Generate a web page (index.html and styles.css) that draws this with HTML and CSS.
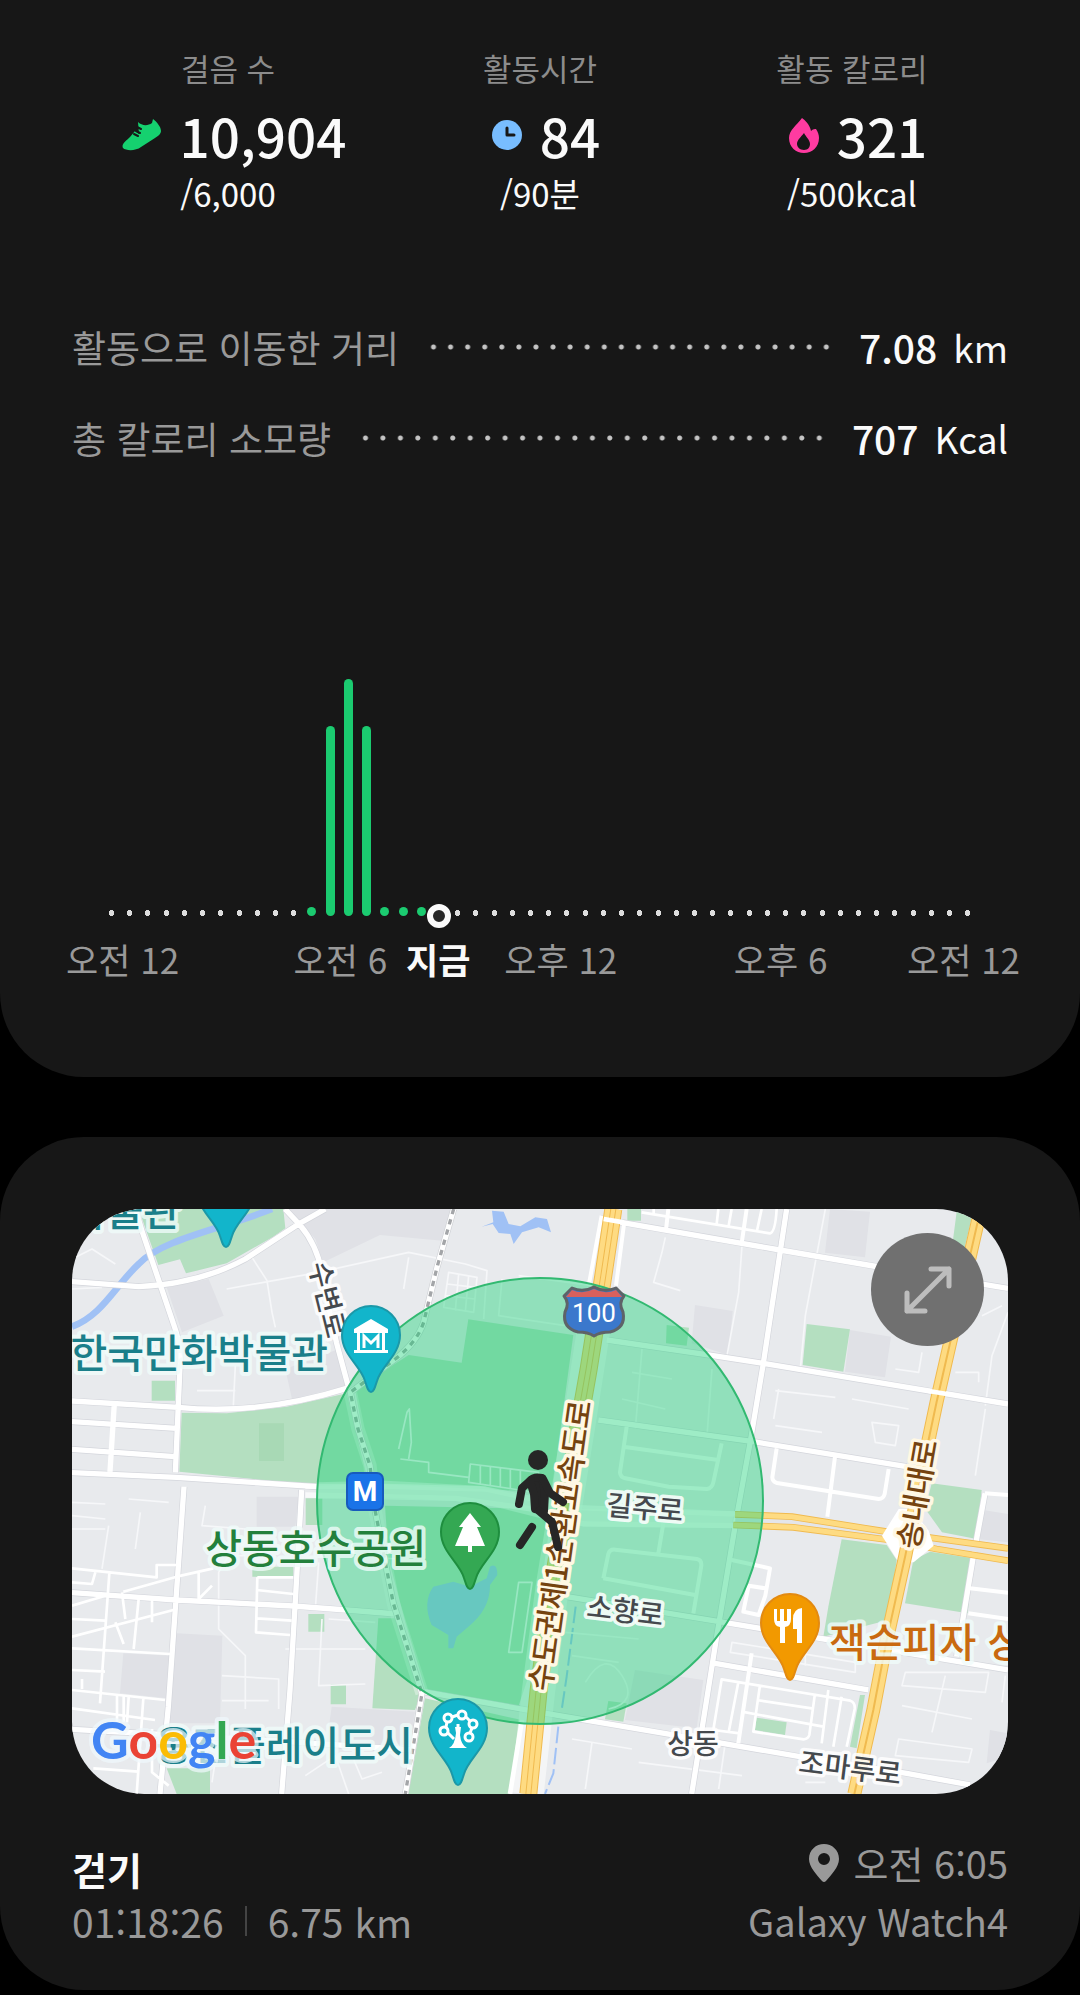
FILE: index.html
```html
<!DOCTYPE html>
<html lang="ko">
<head>
    <meta charset="UTF-8">
    <meta name="viewport" content="width=device-width, initial-scale=1.0">
    <title>일일 활동</title>
    <link rel="stylesheet" href="styles.css">
</head>
<body>

    <main class="page">
        <section class="card card-activity">
            <div class="stats">
                <div class="stat">
                    <div class="stat-label">걸음 수</div>
                    <div class="stat-value">
                        <svg class="icon-shoe" viewBox="0 0 40 32" aria-hidden="true">
                            <path fill="#15d16f" d="M1 29C-1 25 4 22 8 18L13 12L17 15L16 3C20 7 26 7 30 4L31 0C35 3 39 8 39 12C39 15 36 17 33 19L19 28C14 32 4 32 1 29Z"/>
                            <path stroke="#171717" stroke-width="2" stroke-linecap="round" fill="none" d="M12 15L16 17M14 12L18 14M15 8L19 10"/>
                        </svg>
                        <strong>10,904</strong>
                    </div>
                    <div class="stat-goal">/6,000</div>
                </div>
                <div class="stat">
                    <div class="stat-label">활동시간</div>
                    <div class="stat-value">
                        <svg class="icon-round" viewBox="0 0 30 30" aria-hidden="true">
                            <circle cx="15" cy="15" r="15" fill="#78bdff"/>
                            <path stroke="#171717" stroke-width="3" stroke-linecap="round" stroke-linejoin="round" fill="none" d="M15 8V15H22"/>
                        </svg>
                        <strong>84</strong>
                    </div>
                    <div class="stat-goal">/90분</div>
                </div>
                <div class="stat">
                    <div class="stat-label">활동 칼로리</div>
                    <div class="stat-value">
                        <svg class="icon-flame" viewBox="0 0 30 35" aria-hidden="true">
                            <path fill="#ff3ba1" fill-rule="evenodd" d="M13 0C16 2 21 7 22 13C24 11 26 11 27 11C29 14 30 17 30 20C30 29 23 35 15 35C7 35 0 29 0 20C0 12 8 7 13 0ZM15 15C12 19 8 22 8 26C8 29 11 32 15 32C19 32 21 29 21 26C21 22 17 19 15 15Z"/>
                        </svg>
                        <strong>321</strong>
                    </div>
                    <div class="stat-goal">/500kcal</div>
                </div>
            </div>

            <div class="details">
                <div class="detail">
                    <span class="detail-name">활동으로 이동한 거리</span>
                    <span class="leader"></span>
                    <span class="detail-value">7.08</span>
                    <span class="detail-unit">km</span>
                </div>
                <div class="detail">
                    <span class="detail-name">총 칼로리 소모량</span>
                    <span class="leader"></span>
                    <span class="detail-value">707</span>
                    <span class="detail-unit">Kcal</span>
                </div>
            </div>

            <!-- 30분 단위 48칸 -->
            <div class="chart">
                <div class="plot">
                    <i></i><i></i><i></i><i></i><i></i><i></i><i></i><i></i><i></i><i></i><i></i>
                    <i class="low"></i><i class="bar"></i><i class="bar peak"></i><i class="bar"></i>
                    <i class="low"></i><i class="low"></i><i class="low"></i><i class="now"></i>
                    <i></i><i></i><i></i><i></i><i></i><i></i><i></i><i></i><i></i><i></i>
                    <i></i><i></i><i></i><i></i><i></i><i></i><i></i><i></i><i></i><i></i>
                    <i></i><i></i><i></i><i></i><i></i><i></i><i></i><i></i><i></i>
                </div>
                <div class="axis">
                    <span>오전 12</span>
                    <span>오전 6</span>
                    <span class="axis-now">지금</span>
                    <span>오후 12</span>
                    <span>오후 6</span>
                    <span>오전 12</span>
                </div>
            </div>
        </section>

        <section class="card card-workout">
            <div class="map">
                <svg class="map-art" viewBox="0 0 936 585" preserveAspectRatio="xMidYMid slice" role="img" aria-label="운동 경로 지도">
                    <defs>
                        <path id="pin" d="M0 57C-3 57 -4 52 -6 46C-10 31 -29 20 -29 0A29 29 0 0 1 29 0C29 20 10 31 6 46C4 52 3 57 0 57Z"/>
                    </defs>

                    <g transform="scale(.33333)" fill="none" stroke-linejoin="round">
                        <!-- blocks -->
                        <g fill="#e0e1e6">
                            <path d="M284 235L410 210L455 320L330 370Z"/>
                            <path d="M754 160L924 78L1110 95L1140 0H650L730 90Z"/>
                            <path d="M640 480L800 420L825 530L660 570Z"/>
                            <path d="M314 1273L451 1280L444 1543L290 1543Z"/>
                            <path d="M154 1333L300 1340L285 1468L144 1453Z"/>
                            <path d="M779 1493L1029 1508L1014 1608L764 1603Z"/>
                            <path d="M554 863L680 863L670 953H554Z"/>
                            <path d="M2274 0L2394 8L2379 145L2259 131Z"/>
                            <path d="M2334 363L2457 383L2439 505L2319 488Z"/>
                            <path d="M1869 288L1982 306L1969 438L1859 403Z"/>
                            <path d="M1689 1383L1894 1413L1874 1558L1659 1533Z"/>
                            <path d="M2734 903L2808 915V1000L2714 990Z"/>
                            <path d="M2754 1563L2808 1573V1643L2744 1663Z"/>
                        </g>
                        <!-- parks -->
                        <g fill="#b4dfc0">
                            <path d="M200 0H634L640 58L604 83L464 163L342 193L324 151L259 168Z"/>
                            <path d="M329 611L464 613L644 593L824 553L890 825L740 830L322 788Z"/>
                            <path d="M239 515H309V575H239Z"/>
                            <path d="M1189 331L1504 378L1440 850L900 825L850 545L960 470L1010 438L1169 461Z"/>
                            <path d="M939 890L1440 900L1370 1400L1340 1490L1060 1440L1000 1240L950 1050Z"/>
                            <path d="M919 1228H969L1050 1445L1029 1503L901 1498Z"/>
                            <path d="M1059 1468L1349 1533L1314 1755H1009Z"/>
                            <path d="M709 1215H757V1268H709ZM776 1426H822V1486H776ZM701 868H751V948H701ZM541 1073H664V1103H541Z"/>
                            <path d="M284 1678H414V1755H314Z"/>
                            <path d="M1666 0H1707V35H1666ZM2654 8L2700 23L2674 133L2639 123Z"/>
                            <path d="M2204 345L2334 361L2314 488L2192 468Z"/>
                            <path d="M1784 348L1851 356L1844 410L1782 403Z"/>
                            <path d="M2579 823L2729 843L2714 990L2610 970L2560 900Z"/>
                            <path d="M2309 991L2444 1008L2474 1053L2449 1233L2254 1283L2269 1193Z"/>
                            <path d="M2524 1053L2574 1028L2704 1048L2687 1213L2499 1183Z"/>
                            <path d="M2054 1526L2144 1540L2139 1578L2049 1563Z"/>
                            <path d="M2364 1458H2379L2354 1618L2334 1613Z"/>
                            <path d="M1609 1476L1664 1483L1654 1538L1599 1531Z"/>
                        </g>
                        <path fill="#a8d9b5" d="M561 643H636V756H561Z"/>
                        <!-- water -->
                        <path stroke="#a0c1f5" stroke-width="20" d="M0 353C90 320 130 230 200 165C270 90 450 60 600 0"/>
                        <g fill="#a0c1f5">
                            <path d="M1229 53L1264 40L1260 5L1295 8L1310 45L1345 52L1390 25L1425 30L1437 70L1400 55L1350 70L1325 105L1315 75L1280 72L1262 45Z"/>
                            <path d="M1084 1133L1144 1118L1194 1133L1244 1108L1254 1073Q1276 1060 1276 1098L1254 1128Q1255 1200 1189 1253L1154 1283L1144 1318H1129V1278L1079 1248Q1050 1180 1084 1133Z"/>
                        </g>
                        <path stroke="#a0c1f5" stroke-width="6" stroke-dasharray="50 14" d="M1511 1193L1484 1403L1469 1503M1459 1553L1444 1693L1419 1755"/>

                        <!-- alleys -->
                        <g stroke="#f6f7f9" stroke-width="5">
                            <path d="M464 240L740 190L1010 130L1180 165L1245 185L1235 330M540 145L585 215L600 310L610 355M0 240L90 235M0 150L60 120L130 165M1010 145L995 240M490 470L484 590M0 880L100 885M375 545H490M1130 190L1215 205L1205 310L1115 295ZM1160 195L1150 305M1190 200L1180 308M1125 225L1212 235M1120 260L1208 270"/>
                            <path d="M1340 200L1560 230M1290 210L1280 320L1480 350M1680 490L1800 510M1650 570L1780 600M1710 420L1690 660M1920 480L1905 680M1780 85L1770 130L1745 220L1825 245M2010 110L2000 250L1965 440M2260 0L2200 320L2185 480M2110 545L2290 565M2120 540L2105 630M2340 570L2510 600M2110 650L2250 670M2400 640L2480 650L2470 710L2410 700ZM2550 430L2540 490L2470 480M2730 320L2790 290M2740 600L2710 800M2808 310L2760 440L2740 590M2650 490H2720V520"/>
                            <path d="M0 920L100 930M0 960H100M110 950L90 1080M170 870L290 880M205 910L190 1020M400 890L390 950L520 960M470 1040L440 1090V1260L520 1340V1500M450 1400L620 1410V1500M450 1475H590M440 1040H520M740 1060L730 1200M770 1230L910 1240M750 1230L740 1430L880 1425M640 1320H880M440 1590L420 1720M840 1640L870 1710L930 1690M700 1700L790 1640L830 1755M860 1040L970 1050"/>
                            <path d="M1340 1120H1380L1350 1330H1310ZM980 720L1005 610L1012 600L1018 700L1010 750M985 750L1070 760V790L1190 805M1195 765L1400 790L1390 850L1190 820ZM1225 770V825M1255 775V828M1285 778V832M1315 780V838M1345 785V842"/>
                            <path d="M1480 1270L1700 1290M1500 1340L1640 1360M1540 1420Q1600 1320 1650 1400T1610 1500M1980 1300L2350 1360V1390L1975 1330ZM2200 1310V1370M2500 1390H2750L2740 1450L2490 1430ZM2490 1490L2700 1530M2480 1590L2700 1620L2690 1660L2470 1640ZM2620 1400L2580 1570M2800 1400L2790 1480M1500 1590L1680 1620M1560 1600L1540 1740M1700 1660L2010 1700M1960 1600L1940 1740M2200 1720H2260"/>
                        </g>

                        <!-- road casing and fill share the same lines -->
                        <g stroke="#d4d6dc">
                            <path stroke-width="20" d="M0 576L319 595Q560 620 824 538M0 638L314 658M0 721L309 743M0 791L314 805L734 833M0 218L200 233Q380 225 520 150L680 45L760 0M190 0L209 63L304 343Q325 400 325 450L310 790M336 833L289 1493L264 1755M639 0L684 48Q745 120 754 223L794 403L829 533M689 843L669 1193L654 1443L629 1755M0 1151L314 1173L664 1191L824 1203L974 1215M0 1561L604 1595L1024 1623"/>
                            <path stroke-width="20" d="M1584 28L1664 43L2124 123L2404 171L2808 238M1604 393L1924 440L2074 463L2584 548L2808 585M2144 0L2074 463L2034 703L1994 923L1934 1283L1859 1755M1579 633L2044 698L2504 773M1484 1163L1974 1243L2274 1293L2808 1383M1929 1363L2389 1443M1054 1448L1404 1510L1804 1578L2184 1643L2504 1693L2694 1728M2739 853L2704 1043L2654 1343"/>
                        </g>
                        <g stroke="#ffffff" stroke-width="16">
                            <path d="M0 576L319 595Q560 620 824 538M0 638L314 658M0 721L309 743M0 791L314 805L734 833M0 218L200 233Q380 225 520 150L680 45L760 0M190 0L209 63L304 343Q325 400 325 450L310 790M336 833L289 1493L264 1755M639 0L684 48Q745 120 754 223L794 403L829 533M689 843L669 1193L654 1443L629 1755M0 1151L314 1173L664 1191L824 1203L974 1215M0 1561L604 1595L1024 1623M127 583L114 788"/>
                            <path d="M1584 28L1664 43L2124 123L2404 171L2808 238M1604 393L1924 440L2074 463L2584 548L2808 585M2144 0L2074 463L2034 703L1994 923L1934 1283L1859 1755M1579 633L2044 698L2504 773M1484 1163L1974 1243L2274 1293L2808 1383M1929 1363L2389 1443M1054 1448L1404 1510L1804 1578L2184 1643L2504 1693L2694 1728M2739 853L2704 1043L2654 1343"/>
                        </g>
                        <g stroke="#ffffff" stroke-width="12">
                            <path d="M2024 0L2009 103M1789 0L1782 63M1589 20L1550 230M1656 45L1632 230M1664 653L1644 790Q1645 805 1660 808L1790 833L1905 840Q1920 838 1924 820L1949 703M1654 713L1939 753M2114 718L2101 805Q2101 818 2115 822L2420 870Q2434 870 2438 855L2450 780M2289 743L2266 923"/>
                            <path d="M1594 1108L1609 1035Q1613 1020 1630 1022L1875 1050Q1889 1053 1888 1070L1864 1213M1594 1108L1869 1158M1774 943L1759 1033M1979 1053L2094 1078L2080 1160L2060 1218L2014 1208L2030 1130L2080 1138M2039 1333L1999 1603M2694 1138L2808 1151M2689 1213L2808 1230M2739 853L2808 858"/>
                        </g>
                        <g stroke="#ffffff" stroke-width="8">
                            <path d="M1709 10L2094 73Q2110 70 2114 0M1939 0L1934 45M1979 0L1970 50M2069 0L2055 65M1745 0V14"/>
                            <path d="M0 1283L304 1203M154 1148L314 1103L424 1078M0 1078L254 1105V1068H319M0 1318L294 1335M0 1383L99 1388M0 1443L279 1473M0 1498L249 1533M112 1093L84 1483M214 1468L194 1755M64 1678L199 1688M0 1190L100 1160M150 1150L160 1230M200 1170L185 1320M240 1165V1240M130 1240L155 1305M380 1090V1170L420 1130M556 1105H664M556 1105L552 1270L654 1278M554 1143L664 1155M554 1228L659 1235M135 1460V1540M155 1460V1540M170 1465L165 1540M30 1410V1440M0 1230L100 1235M240 1560V1690L290 1730M0 1120L60 1125L70 1090"/>
                            <path d="M1924 1563L1949 1411L2335 1475Q2350 1480 2348 1500L2324 1613M2064 1428L2044 1568L2195 1591Q2209 1590 2212 1578L2229 1453M2054 1473L2219 1498M2009 1508L2254 1553M2269 1443L2249 1603M2309 1463L2284 1613M1999 1420L1970 1570M1924 1563L2004 1573"/>
                        </g>

                        <!-- wide boulevard -->
                        <path stroke="#ffffff" stroke-width="50" opacity=".5" d="M734 845L940 840L1220 855L1500 925L1990 932"/>
                        <path stroke="#ffffff" stroke-width="16" opacity=".7" d="M700 832L940 832L1240 840L1500 895L1990 915M700 858L1150 868L1380 900L1534 945L1990 950"/>
                        <path stroke="#e4e5e9" stroke-width="16" d="M1990 932L2170 938L2450 978L2808 1036"/>
                        <g stroke="#f0ba4f" stroke-width="20">
                            <path d="M1989 916L2160 923L2444 968L2808 1018M1984 948L2164 955L2454 993L2594 1020L2808 1055"/>
                        </g>
                        <g stroke="#fedb82" stroke-width="15">
                            <path d="M1989 916L2160 923L2444 968L2808 1018M1984 948L2164 955L2454 993L2594 1020L2808 1055"/>
                        </g>

                        <!-- railway -->
                        <path stroke="#ffffff" stroke-width="40" opacity=".35" d="M835 550L858 660L894 770L909 903L964 1183L1050 1453"/>
                        <path stroke="#d0d2d6" stroke-width="20" d="M1145 0L1095 175L1055 340Q1035 400 970 450L835 550L858 660L894 770L909 903L964 1183L1050 1453L1000 1755"/>
                        <path stroke="#ffffff" stroke-width="16" d="M1145 0L1095 175L1055 340Q1035 400 970 450L835 550L858 660L894 770L909 903L964 1183L1050 1453L1000 1755"/>
                        <path stroke="#a3a5a8" stroke-width="10" stroke-dasharray="16 16" d="M1145 0L1095 175L1055 340Q1035 400 970 450L835 550L858 660L894 770L909 903L964 1183L1050 1453L1000 1755"/>

                        <!-- expressways -->
                        <path stroke="#ffffff" stroke-width="100" opacity=".5" d="M1570 330L1520 650L1440 1140L1400 1443L1365 1755"/>
                        <path stroke="#f0ba4f" stroke-width="54" d="M1624 0L1594 200L1550 480L1520 650L1440 1140L1400 1443L1369 1755"/>
                        <path stroke="#fedb82" stroke-width="48" d="M1624 0L1594 200L1550 480L1520 650L1440 1140L1400 1443L1369 1755"/>
                        <path stroke="#f0ba4f" stroke-width="18" d="M1624 0L1594 200L1550 480L1520 650L1440 1140L1400 1443L1369 1755"/>
                        <path stroke="#fedb82" stroke-width="12" d="M1624 0L1594 200L1550 480L1520 650L1440 1140L1400 1443L1369 1755"/>
                        <path stroke="#ffffff" stroke-width="14" d="M1350 1533L1314 1755"/>
                        <path fill="#ffffff" d="M2430 980L2480 900H2520L2570 965L2585 1010L2525 1060H2480Z"/>
                        <path stroke="#f0ba4f" stroke-width="42" d="M2726 0L2594 578L2564 720L2500 1040L2444 1293L2404 1503L2347 1755"/>
                        <path stroke="#fedb82" stroke-width="36" d="M2726 0L2594 578L2564 720L2500 1040L2444 1293L2404 1503L2347 1755"/>
                        <path stroke="#f0ba4f" stroke-width="6" d="M2726 0L2594 578L2564 720L2500 1040L2444 1293L2404 1503L2347 1755"/>
                        <path stroke="#ffffff" stroke-width="14" d="M2570 546L2625 555M1595 30L1655 40"/>
                    </g>

                    <circle class="map-area" cx="468" cy="292" r="223"/>

                    <!-- route shield -->
                    <g>
                        <path fill="#3b78cc" stroke="#5e6368" stroke-width="3" stroke-linejoin="round" d="M500 79Q511 84 522 78Q533 84 544 79L552 87Q546 94 551 103Q554 119 538 123Q528 123 522 127Q516 123 506 123Q490 119 493 103Q498 94 492 87Z"/>
                        <path fill="#d9605c" d="M500 81Q511 86 522 80Q533 86 544 81L550 88H494Z"/>
                        <text class="shield-text" x="522" y="113">100</text>
                    </g>

                    <g class="street highway">
                        <text transform="translate(499 338) rotate(-82)">수도권제1순환고속도로</text>
                        <text transform="translate(856 287) rotate(-80)">송내대로</text>
                    </g>

                    <!-- walker -->
                    <g fill="none" stroke="#262626" stroke-width="8" stroke-linecap="round" stroke-linejoin="round">
                        <circle cx="466" cy="251" r="10" fill="#262626" stroke="none"/>
                        <path fill="#262626" d="M458 272Q462 267 470 269L473 284L472 302L463 300L462 285Z"/>
                        <path d="M459 271L450 279L447 295M471 270L478 284L491 293M460 318L448 336M467 302L480 313L486 338"/>
                    </g>

                    <g class="street">
                        <text transform="translate(246 93) rotate(76)">수변로</text>
                        <text transform="translate(572 309) rotate(5)">길주로</text>
                        <text transform="translate(552 412) rotate(7)">소향로</text>
                        <text transform="translate(621 545)">상동</text>
                        <text transform="translate(777 569) rotate(7)">조마루로</text>
                    </g>

                    <g class="place">
                        <text class="culture end" x="108" y="17">박물관</text>
                        <text class="culture end" x="256" y="159">한국만화박물관</text>
                        <text class="park end" x="354" y="354">상동호수공원</text>
                        <text class="culture end" x="341" y="551">웅진플레이도시</text>
                        <text class="food" x="757" y="448">잭슨피자 상</text>
                    </g>

                    <!-- pins -->
                    <g stroke-width="2">
                        <use href="#pin" x="154" y="-19" fill="#12b5cb" stroke="#1b98a8"/>
                        <use href="#pin" x="299" y="126" fill="#12b5cb" stroke="#1b98a8"/>
                        <use href="#pin" x="398" y="323" fill="#34a853" stroke="#1e8e3e"/>
                        <use href="#pin" x="386" y="519" fill="#12b5cb" stroke="#1b98a8"/>
                        <use href="#pin" x="718" y="414" fill="#f29900" stroke="#e38a10"/>
                    </g>
                    <g fill="#ffffff">
                        <path fill-rule="evenodd" d="M299 110L316 120V124H313V141H316V144H282V141H285V124H282V120ZM288 124V141H310V124Z"/>
                        <path fill="none" stroke="#ffffff" stroke-width="3" d="M292 139V127L299 134L306 127V139"/>
                        <path d="M398 304L409 318H405L413 337H400V343H396V337H383L391 318H387Z"/>
                        <path d="M702 400H705V412H708V400H712V412H715V400H719V410Q719 417 713 418V434H708V418Q702 417 702 410ZM730 399V434H725V420H721V410Q721 400 730 399Z"/>
                        <path d="M384 524L383 518H389L388 526Q389 536 395 539H377Q383 536 384 524Z"/>
                    </g>
                    <g fill="none" stroke="#ffffff" stroke-width="3">
                        <circle cx="372" cy="522" r="4"/>
                        <circle cx="376" cy="509" r="4"/>
                        <circle cx="390" cy="506" r="4"/>
                        <circle cx="401" cy="515" r="4"/>
                        <circle cx="397" cy="528" r="4"/>
                        <path d="M374 518L375 513M380 508L386 506M394 508L398 512M400 519L398 524M376 524L382 530M386 518V515"/>
                    </g>

                    <rect x="275" y="264" width="36" height="37" rx="6" fill="#1a73e8" stroke="#185abc" stroke-width="2"/>
                    <text class="metro-text" x="293" y="292">M</text>

                    <text class="google" x="19" y="550"><tspan fill="#4285f4">G</tspan><tspan fill="#ea4335">o</tspan><tspan fill="#fbbc05">o</tspan><tspan fill="#4285f4">g</tspan><tspan fill="#34a853">l</tspan><tspan fill="#ea4335">e</tspan></text>
                </svg>
                <button class="expand" type="button" aria-label="지도 확대">
                    <svg viewBox="0 0 48 48" aria-hidden="true">
                        <path d="M27 3H45V20M45 3L3 45M3 27V45H21"/>
                    </svg>
                </button>
            </div>

            <div class="workout">
                <div class="workout-main">
                    <h2>걷기</h2>
                    <p class="workout-data"><span>01:18:26</span><span class="divider"></span><span>6.75 km</span></p>
                </div>
                <div class="workout-side">
                    <p class="workout-time">
                        <svg class="icon-place" viewBox="0 0 30 38" aria-hidden="true">
                            <path fill="#999999" fill-rule="evenodd" d="M15 0C23 0 30 6 30 15C30 23 22 31 17 37Q15 39 13 37C8 31 0 23 0 15C0 6 7 0 15 0ZM15 9A6 6 0 1 0 15 21A6 6 0 1 0 15 9Z"/>
                        </svg>
                        오전 6:05
                    </p>
                    <p>Galaxy Watch4</p>
                </div>
            </div>
        </section>
    </main>

</body>
</html>
```
FILE: styles.css
```css
* {
    box-sizing: border-box;
}
body {
    margin: 0;
    background-color: #000000;
    color: #fafafa;
    font-family: "Noto Sans CJK KR", "Noto Sans", sans-serif;
}
h2, p {
    margin: 0;
}
.page {
    display: flex;
    flex-direction: column;
    gap: 60px;
}
.card {
    background-color: #171717;
    padding: 0 72px;
}
.card-activity {
    padding-top: 48px;
    padding-bottom: 93px;
    border-radius: 0 0 84px 84px;
}
.card-workout {
    padding-top: 72px;
    padding-bottom: 44px;
    border-radius: 84px;
}

/* stats */
.stats {
    display: grid;
    grid-template-columns: repeat(3, 1fr);
    text-align: center;
}
.stat-label {
    font-size: 31px;
    line-height: 40px;
    color: #8c8c8c;
}
.stat-value {
    display: flex;
    align-items: center;
    justify-content: center;
    gap: 18px;
    margin-top: 17px;
    padding-left: 12px;
    font-size: 53px;
    line-height: 60px;
}
.stat-value strong {
    font-weight: 500;
}
.icon-shoe {
    width: 40px;
    height: 32px;
}
.icon-round {
    width: 30px;
    height: 30px;
}
.icon-flame {
    width: 30px;
    height: 35px;
}
.stat-goal {
    margin-top: 8px;
    font-size: 33px;
    line-height: 40px;
}

/* details */
.details {
    display: flex;
    flex-direction: column;
    gap: 41px;
    margin-top: 109px;
}
.detail {
    display: flex;
    align-items: center;
    font-size: 37px;
    line-height: 50px;
}
.detail-name {
    color: #999999;
}
.leader {
    flex: 1;
    height: 6px;
    margin: 0 24px 0 26px;
    background-image: radial-gradient(circle, #c4c4c4 2px, transparent 3px);
    background-size: 17px 6px;
    background-repeat: space no-repeat;
}
.detail-value {
    font-size: 39px;
    font-weight: 500;
}
.detail-unit {
    margin-left: 16px;
}

/* chart */
.chart {
    margin-top: 216px;
}
.plot {
    display: flex;
    align-items: flex-end;
    justify-content: space-between;
    height: 237px;
    padding: 0 35px;
}
.plot i {
    width: 9px;
    height: 6px;
    background: radial-gradient(circle, #dcdcdc 3px, transparent 3px);
}
.plot .low, .plot .bar {
    height: 9px;
    border-radius: 5px;
    background: #1bcb70;
}
.plot .bar {
    height: 190px;
}
.plot .peak {
    height: 237px;
}
.plot .now {
    width: 24px;
    height: 24px;
    margin: 0 -7px -12px -8px;
    border: 6px solid #fafafa;
    border-radius: 50%;
    background: #262626;
}
.axis {
    display: grid;
    grid-template-columns: auto 115fr auto 19fr auto 34fr auto 117fr auto 80fr auto;
    margin: 18px -12px 0 -6px;
    font-size: 35px;
    line-height: 50px;
    color: #999999;
}
.axis span:nth-child(2) { grid-column: 3; }
.axis span:nth-child(3) { grid-column: 5; }
.axis span:nth-child(4) { grid-column: 7; }
.axis span:nth-child(5) { grid-column: 9; }
.axis span:nth-child(6) { grid-column: 11; }
.axis .axis-now {
    color: #fafafa;
    font-weight: 700;
}

/* map */
.map {
    position: relative;
    aspect-ratio: 936 / 585;
    border-radius: 72px;
    overflow: hidden;
    background-color: #e8eaed;
}
.map-art {
    display: block;
    width: 100%;
    height: 100%;
}
.map-area {
    fill: rgba(25, 210, 118, 0.42);
    stroke: #32b971;
    stroke-width: 2;
}
.map-art text {
    paint-order: stroke;
    stroke-linejoin: round;
}
.street text {
    font-size: 28px;
    text-anchor: middle;
    fill: #45494e;
    stroke: rgba(255, 255, 255, 0.85);
    stroke-width: 7px;
    font-weight: 500;
}
.highway text {
    font-size: 30px;
    fill: #75430f;
    stroke: #fff8e4;
}
.place text {
    font-size: 40px;
    font-weight: 500;
    stroke: rgba(240, 252, 250, 0.8);
    stroke-width: 8px;
}
.place .end {
    text-anchor: end;
}
.place .culture {
    fill: #1a7f8a;
}
.place .park {
    fill: #23803c;
}
.place .food {
    fill: #c96a10;
}
.shield-text {
    font-family: Roboto, sans-serif;
    font-size: 26px;
    text-anchor: middle;
    fill: #ffffff;
}
.metro-text {
    font-family: Roboto, sans-serif;
    font-size: 28px;
    font-weight: 700;
    text-anchor: middle;
    fill: #ffffff;
}
.google {
    font-family: Lato, sans-serif;
    font-size: 52px;
    font-weight: 700;
    stroke: rgba(240, 248, 252, 0.7);
    stroke-width: 8px;
}
.expand {
    position: absolute;
    top: 24px;
    right: 24px;
    display: flex;
    align-items: center;
    justify-content: center;
    width: 113px;
    height: 113px;
    padding: 0;
    border: none;
    border-radius: 50%;
    background-color: #707070;
    cursor: pointer;
}
.expand svg {
    width: 48px;
    height: 48px;
    fill: none;
    stroke: #bdbdbd;
    stroke-width: 5;
    stroke-linecap: round;
    stroke-linejoin: round;
}

/* workout summary */
.workout {
    display: flex;
    justify-content: space-between;
    margin-top: 44px;
    font-size: 38px;
    line-height: 50px;
    color: #999999;
}
.workout h2 {
    margin-top: 6px;
    font-size: 38px;
    font-weight: 700;
    color: #fafafa;
}
.workout-data {
    display: flex;
    align-items: center;
    gap: 21px;
    margin-top: 2px;
    font-size: 39px;
}
.divider {
    width: 2px;
    height: 30px;
    background-color: #444444;
}
.workout-side {
    display: flex;
    flex-direction: column;
    gap: 8px;
    text-align: right;
}
.workout-time {
    display: flex;
    align-items: center;
    justify-content: flex-end;
    gap: 15px;
}
.icon-place {
    width: 30px;
    height: 38px;
}
```
